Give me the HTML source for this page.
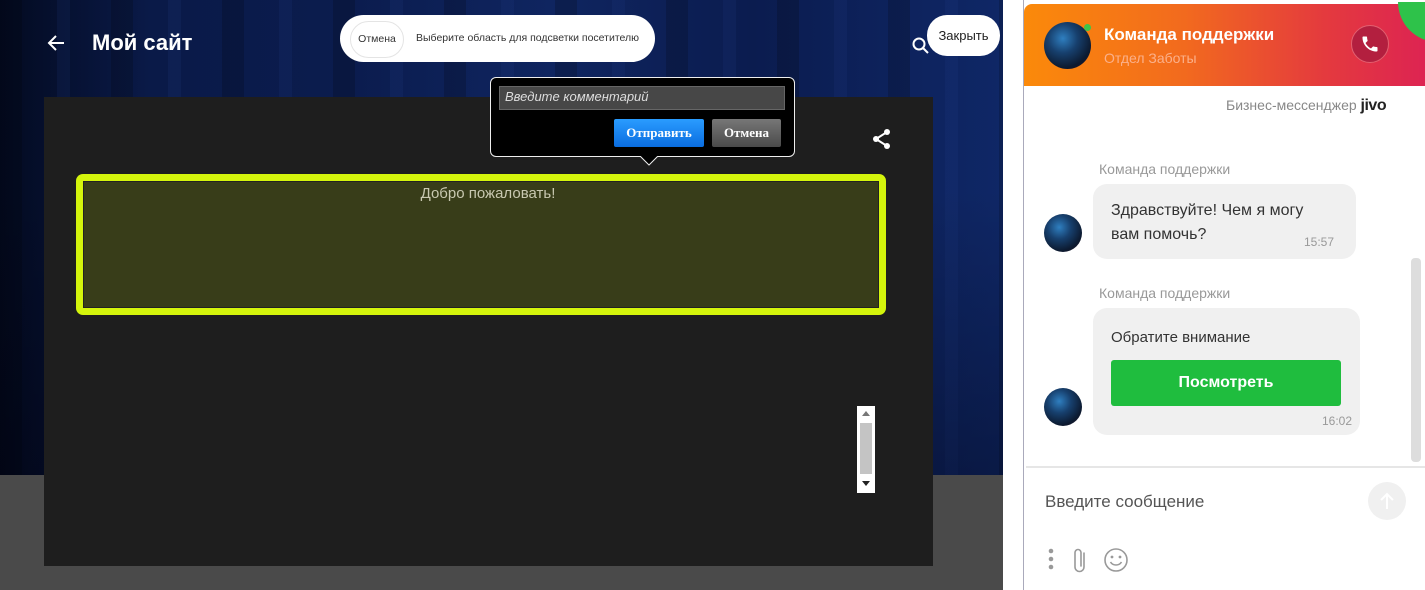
<!DOCTYPE html>
<html><head><meta charset="utf-8"><style>
*{margin:0;padding:0;box-sizing:border-box}
body{width:1425px;height:590px;overflow:hidden;position:relative;background:#fff;font-family:"Liberation Sans",sans-serif}
.a{position:absolute}
.av{border-radius:50%;background:radial-gradient(circle at 40% 35%,#2f7fc0 0%,#17406e 35%,#0c1a30 70%,#2a1020 100%)}
</style></head><body>
<div class="a" style="left:0;top:0;width:1003px;height:475px;background:linear-gradient(90deg,#030a20 0%,#0a1a48 15%,#0b1c4e 35%,#0f2560 55%,#0b1c4f 75%,#0f2766 100%)"></div>
<div class="a" style="left:0;top:0;width:1003px;height:475px;background:repeating-linear-gradient(90deg,rgba(0,0,0,0.18) 0 22px,rgba(0,0,0,0) 22px 57px,rgba(40,70,150,0.12) 57px 70px,rgba(0,0,0,0) 70px 111px)"></div>
<div class="a" style="left:0;top:0;width:1003px;height:475px;background:linear-gradient(180deg,rgba(0,0,0,0) 40%,rgba(0,0,10,0.35) 100%)"></div>
<div class="a" style="left:0;top:475px;width:1003px;height:115px;background:#4a4a4a"></div>
<div class="a" style="left:1003px;top:0;width:20px;height:590px;background:#fff"></div>
<div class="a" style="left:1023px;top:0;width:1px;height:590px;background:#aab"></div>

<svg class="a" style="left:46px;top:34px" width="20" height="18" viewBox="0 0 20 18"><path d="M18 9H3M10 2L3 9l7 7" stroke="#fff" stroke-width="2" fill="none"/></svg>
<div class="a" style="left:92px;top:30px;color:#fff;font-weight:bold;font-size:22px">Мой сайт</div>

<div class="a" style="left:340px;top:15px;width:315px;height:47px;background:#fff;border-radius:24px"></div>
<div class="a" style="left:350px;top:21px;width:54px;height:37px;border:1px solid #e4e4e4;border-radius:19px;font-size:10.5px;color:#333;line-height:35px;text-align:center">Отмена</div>
<div class="a" style="left:416px;top:32px;font-size:10.5px;color:#333;white-space:nowrap">Выберите область для подсветки посетителю</div>

<svg class="a" style="left:911px;top:36px" width="20" height="20" viewBox="0 0 20 20"><circle cx="8" cy="8" r="5.5" stroke="#fff" stroke-width="2" fill="none"/><path d="M12 12l5 5" stroke="#fff" stroke-width="2"/></svg>
<div class="a" style="left:927px;top:15px;width:73px;height:41px;background:#fff;border-radius:20px;font-size:13px;color:#222;line-height:41px;text-align:center">Закрыть</div>

<div class="a" style="left:44px;top:97px;width:889px;height:469px;background:#1e1e1e"></div>
<svg class="a" style="left:871px;top:128px" width="22" height="22" viewBox="0 0 22 22"><circle cx="16" cy="4" r="3" fill="#fff"/><circle cx="5" cy="11" r="3" fill="#fff"/><circle cx="16" cy="18" r="3" fill="#fff"/><path d="M16 4L5 11l11 7" stroke="#fff" stroke-width="2" fill="none"/></svg>

<div class="a" style="left:76px;top:174px;width:810px;height:141px;background:#d4f50c;border-radius:7px"></div>
<div class="a" style="left:83px;top:181px;width:796px;height:127px;background:#383d19;border:1px solid #222"></div>
<div class="a" style="top:185px;text-align:center;font-size:15px;color:#c8c8b0;left:90px;width:796px">Добро пожаловать!</div>

<div class="a" style="left:490px;top:77px;width:305px;height:80px;background:#000;border:1px solid #eee;border-radius:6px"></div>
<svg class="a" style="left:640px;top:155px" width="18" height="11" viewBox="0 0 18 11"><path d="M0 1L9 10L18 1" fill="#000" stroke="#eee" stroke-width="1"/><rect x="0" y="-1" width="18" height="2" fill="#000"/></svg>
<div class="a" style="left:499px;top:86px;width:286px;height:24px;background:#474747;border:1px solid #666;color:#ddd;font-style:italic;font-size:13px;padding:2px 5px">Введите комментарий</div>
<div class="a" style="left:614px;top:119px;width:90px;height:28px;background:linear-gradient(#2a9cff,#0a6de0);border-radius:2px;color:#fff;font-weight:bold;font-size:13px;line-height:28px;text-align:center;font-family:'Liberation Serif',serif">Отправить</div>
<div class="a" style="left:712px;top:119px;width:69px;height:28px;background:linear-gradient(#777,#4a4a4a);border-radius:2px;color:#fff;font-weight:bold;font-size:13px;line-height:28px;text-align:center;font-family:'Liberation Serif',serif">Отмена</div>

<div class="a" style="left:857px;top:406px;width:18px;height:87px;background:#fff"></div>
<div class="a" style="left:860px;top:423px;width:12px;height:51px;background:#c4c4c4"></div>
<div class="a" style="left:862px;top:411px;width:0;height:0;border:4px solid transparent;border-bottom:5px solid #777;border-top:0"></div>
<div class="a" style="left:862px;top:481px;width:0;height:0;border:4px solid transparent;border-top:5px solid #222;border-bottom:0"></div>

<!-- chat -->
<div class="a" style="left:1024px;top:4px;width:401px;height:82px;background:linear-gradient(90deg,#fb8a0a 0%,#f26a1e 40%,#e43a3e 75%,#dd2452 100%);border-radius:8px 0 0 0"></div>
<div class="a" style="left:1398px;top:2px;width:40px;height:40px;background:#2ec24a;border-radius:0 0 0 40px"></div>
<div class="a av" style="left:1044px;top:22px;width:47px;height:47px"></div>
<div class="a" style="left:1084px;top:24px;width:7px;height:7px;border-radius:50%;background:#3ec44a"></div>
<div class="a" style="left:1104px;top:25px;color:#fff;font-size:17px;font-weight:bold">Команда поддержки</div>
<div class="a" style="left:1104px;top:50px;color:#fbb08a;font-size:14px">Отдел Заботы</div>
<div class="a" style="left:1351px;top:25px;width:38px;height:38px;border-radius:50%;background:#b31f3f;border:1px solid #e26070"></div>
<svg class="a" style="left:1360px;top:34px" width="20" height="20" viewBox="0 0 24 24"><path d="M6.6 10.8c1.4 2.8 3.8 5.1 6.6 6.6l2.2-2.2c.3-.3.7-.4 1-.2 1.1.4 2.3.6 3.6.6.6 0 1 .4 1 1V20c0 .6-.4 1-1 1C10.6 21 3 13.4 3 4c0-.6.4-1 1-1h3.5c.6 0 1 .4 1 1 0 1.3.2 2.5.6 3.6.1.3 0 .7-.2 1L6.6 10.8z" fill="#fff"/></svg>

<div class="a" style="left:1226px;top:97px;font-size:14px;color:#888">Бизнес-мессенджер <b style="color:#222;font-size:16px;letter-spacing:-0.5px">jivo</b></div>

<div class="a" style="left:1099px;top:161px;font-size:14px;color:#999">Команда поддержки</div>
<div class="a" style="left:1093px;top:184px;width:263px;height:75px;background:#f0f0f0;border-radius:14px"></div>
<div class="a" style="left:1111px;top:199px;font-size:16px;color:#333;line-height:24px">Здравствуйте! Чем я могу<br>вам помочь?</div>
<div class="a" style="left:1304px;top:235px;font-size:12px;color:#999">15:57</div>
<div class="a av" style="left:1044px;top:214px;width:38px;height:38px"></div>

<div class="a" style="left:1099px;top:285px;font-size:14px;color:#999">Команда поддержки</div>
<div class="a" style="left:1093px;top:308px;width:267px;height:127px;background:#f0f0f0;border-radius:14px"></div>
<div class="a" style="left:1111px;top:329px;font-size:15px;color:#333">Обратите внимание</div>
<div class="a" style="left:1111px;top:360px;width:230px;height:46px;background:#1fbd3e;border-radius:3px;color:#fff;font-weight:bold;font-size:16px;line-height:46px;text-align:center">Посмотреть</div>
<div class="a" style="left:1322px;top:414px;font-size:12px;color:#999">16:02</div>
<div class="a av" style="left:1044px;top:388px;width:38px;height:38px"></div>

<div class="a" style="left:1411px;top:258px;width:10px;height:204px;background:#ddd;border-radius:4px"></div>
<div class="a" style="left:1026px;top:466px;width:399px;height:2px;background:#e6e6e6"></div>
<div class="a" style="left:1045px;top:492px;font-size:17px;color:#555">Введите сообщение</div>
<div class="a" style="left:1368px;top:482px;width:38px;height:38px;border-radius:50%;background:#f0f0f0"></div>
<svg class="a" style="left:1379px;top:491px" width="16" height="20" viewBox="0 0 16 20"><path d="M8 18V3M2 9l6-6 6 6" stroke="#fff" stroke-width="2" fill="none"/></svg>

<svg class="a" style="left:1046px;top:547px" width="10" height="26"><circle cx="5" cy="4" r="2.3" fill="#999"/><circle cx="5" cy="12" r="2.3" fill="#999"/><circle cx="5" cy="20" r="2.3" fill="#999"/></svg>
<svg class="a" style="left:1071px;top:546px" width="18" height="28" viewBox="0 0 18 28"><path d="M13 7v14a4.5 4.5 0 0 1-9 0V6.5a3 3 0 0 1 6 0V20" stroke="#999" stroke-width="1.6" fill="none" stroke-linecap="round"/></svg>
<svg class="a" style="left:1103px;top:547px" width="26" height="26" viewBox="0 0 26 26"><circle cx="13" cy="13" r="11" stroke="#999" stroke-width="1.6" fill="none"/><circle cx="9" cy="10" r="1.4" fill="#999"/><circle cx="17" cy="10" r="1.4" fill="#999"/><path d="M7.5 15c2.5 4 8.5 4 11 0" stroke="#999" stroke-width="1.6" fill="none"/></svg>
</body></html>
